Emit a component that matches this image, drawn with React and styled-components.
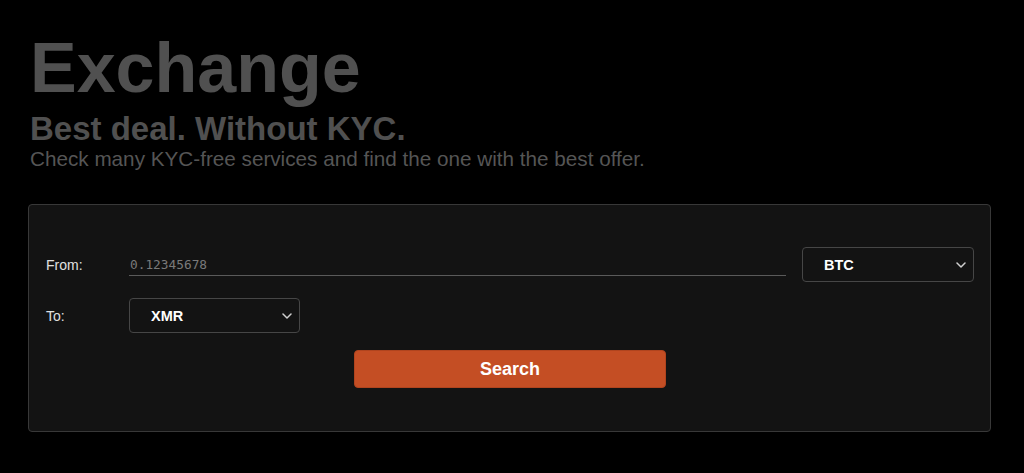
import React, { useState } from 'react'
import styled, { createGlobalStyle } from 'styled-components'

const GlobalStyle = createGlobalStyle`
  html, body {
    margin: 0;
    padding: 0;
    background: #000;
    font-family: "Liberation Sans", Arial, sans-serif;
  }
`

function Chevron() {
  return (
    <svg width="10" height="6" viewBox="0 0 10 6" fill="none">
      <path d="M1 1l4 4 4-4" stroke="#d0d0d0" strokeWidth="1.5" strokeLinecap="round" strokeLinejoin="round" />
    </svg>
  )
}

function Select({ value, width }) {
  return (
    <SelectBox $width={width}>
      <span>{value}</span>
      <Chevron />
    </SelectBox>
  )
}

export default function App() {
  const [amount, setAmount] = useState('')

  return (
    <Page>
      <GlobalStyle />
      <Header>
        <Title>Exchange</Title>
        <Tagline>Best deal. Without KYC.</Tagline>
        <Lead>Check many KYC-free services and find the one with the best offer.</Lead>
      </Header>
      <Card>
        <Row>
          <Label htmlFor="amount">From:</Label>
          <AmountInput
            id="amount"
            placeholder="0.12345678"
            value={amount}
            onChange={(e) => setAmount(e.target.value)}
          />
          <Select value="BTC" width={172} />
        </Row>
        <Row>
          <Label>To:</Label>
          <Select value="XMR" width={171} />
        </Row>
        <ButtonRow>
          <SearchButton>Search</SearchButton>
        </ButtonRow>
      </Card>
    </Page>
  )
}

const Page = styled.div`
  padding: 33px 33px 40px 28px;
`

const Header = styled.header`
  padding-left: 2px;
  color: #505050;
`

const Title = styled.h1`
  margin: 0;
  font-size: 70px;
  line-height: 70px;
  font-weight: 700;
`

const Tagline = styled.h2`
  margin: 9px 0 0;
  font-size: 33px;
  line-height: 33px;
  font-weight: 700;
`

const Lead = styled.p`
  margin: 2px 0 0;
  font-size: 20.7px;
  line-height: 23px;
  color: #555;
`

const Card = styled.div`
  margin-top: 34px;
  background: #131313;
  border: 1px solid #383838;
  border-radius: 4px;
  padding: 42px 16px 43px 17px;
  display: flex;
  flex-direction: column;
  gap: 16px;
`

const Row = styled.div`
  display: flex;
  align-items: center;
  gap: 16px;
`

const Label = styled.label`
  width: 67px;
  color: #e0e0e0;
  font-size: 14px;
`

const AmountInput = styled.input`
  flex: 1;
  background: transparent;
  border: none;
  border-bottom: 1px solid #5a5a5a;
  outline: none;
  color: #ddd;
  padding: 2px 1px 3px;
  margin-top: 2px;
  font-family: "DejaVu Sans Mono", monospace;
  font-size: 12.8px;
  &::placeholder {
    color: #7a7a7a;
  }
`

const SelectBox = styled.div`
  width: ${(p) => p.$width}px;
  height: 35px;
  box-sizing: border-box;
  border: 1px solid #464646;
  border-radius: 4px;
  background: #131313;
  display: flex;
  align-items: center;
  justify-content: space-between;
  padding: 0 7px 0 21px;
  color: #fff;
  font-weight: 700;
  font-size: 14.5px;
  cursor: pointer;
`

const ButtonRow = styled.div`
  display: flex;
  justify-content: center;
  margin-top: 1px;
`

const SearchButton = styled.button`
  width: 312px;
  height: 38px;
  border: 1px solid #b0441e;
  border-radius: 4px;
  background: #c44e24;
  color: #fff;
  font-family: "Liberation Sans", Arial, sans-serif;
  font-weight: 700;
  font-size: 18px;
  cursor: pointer;
`
